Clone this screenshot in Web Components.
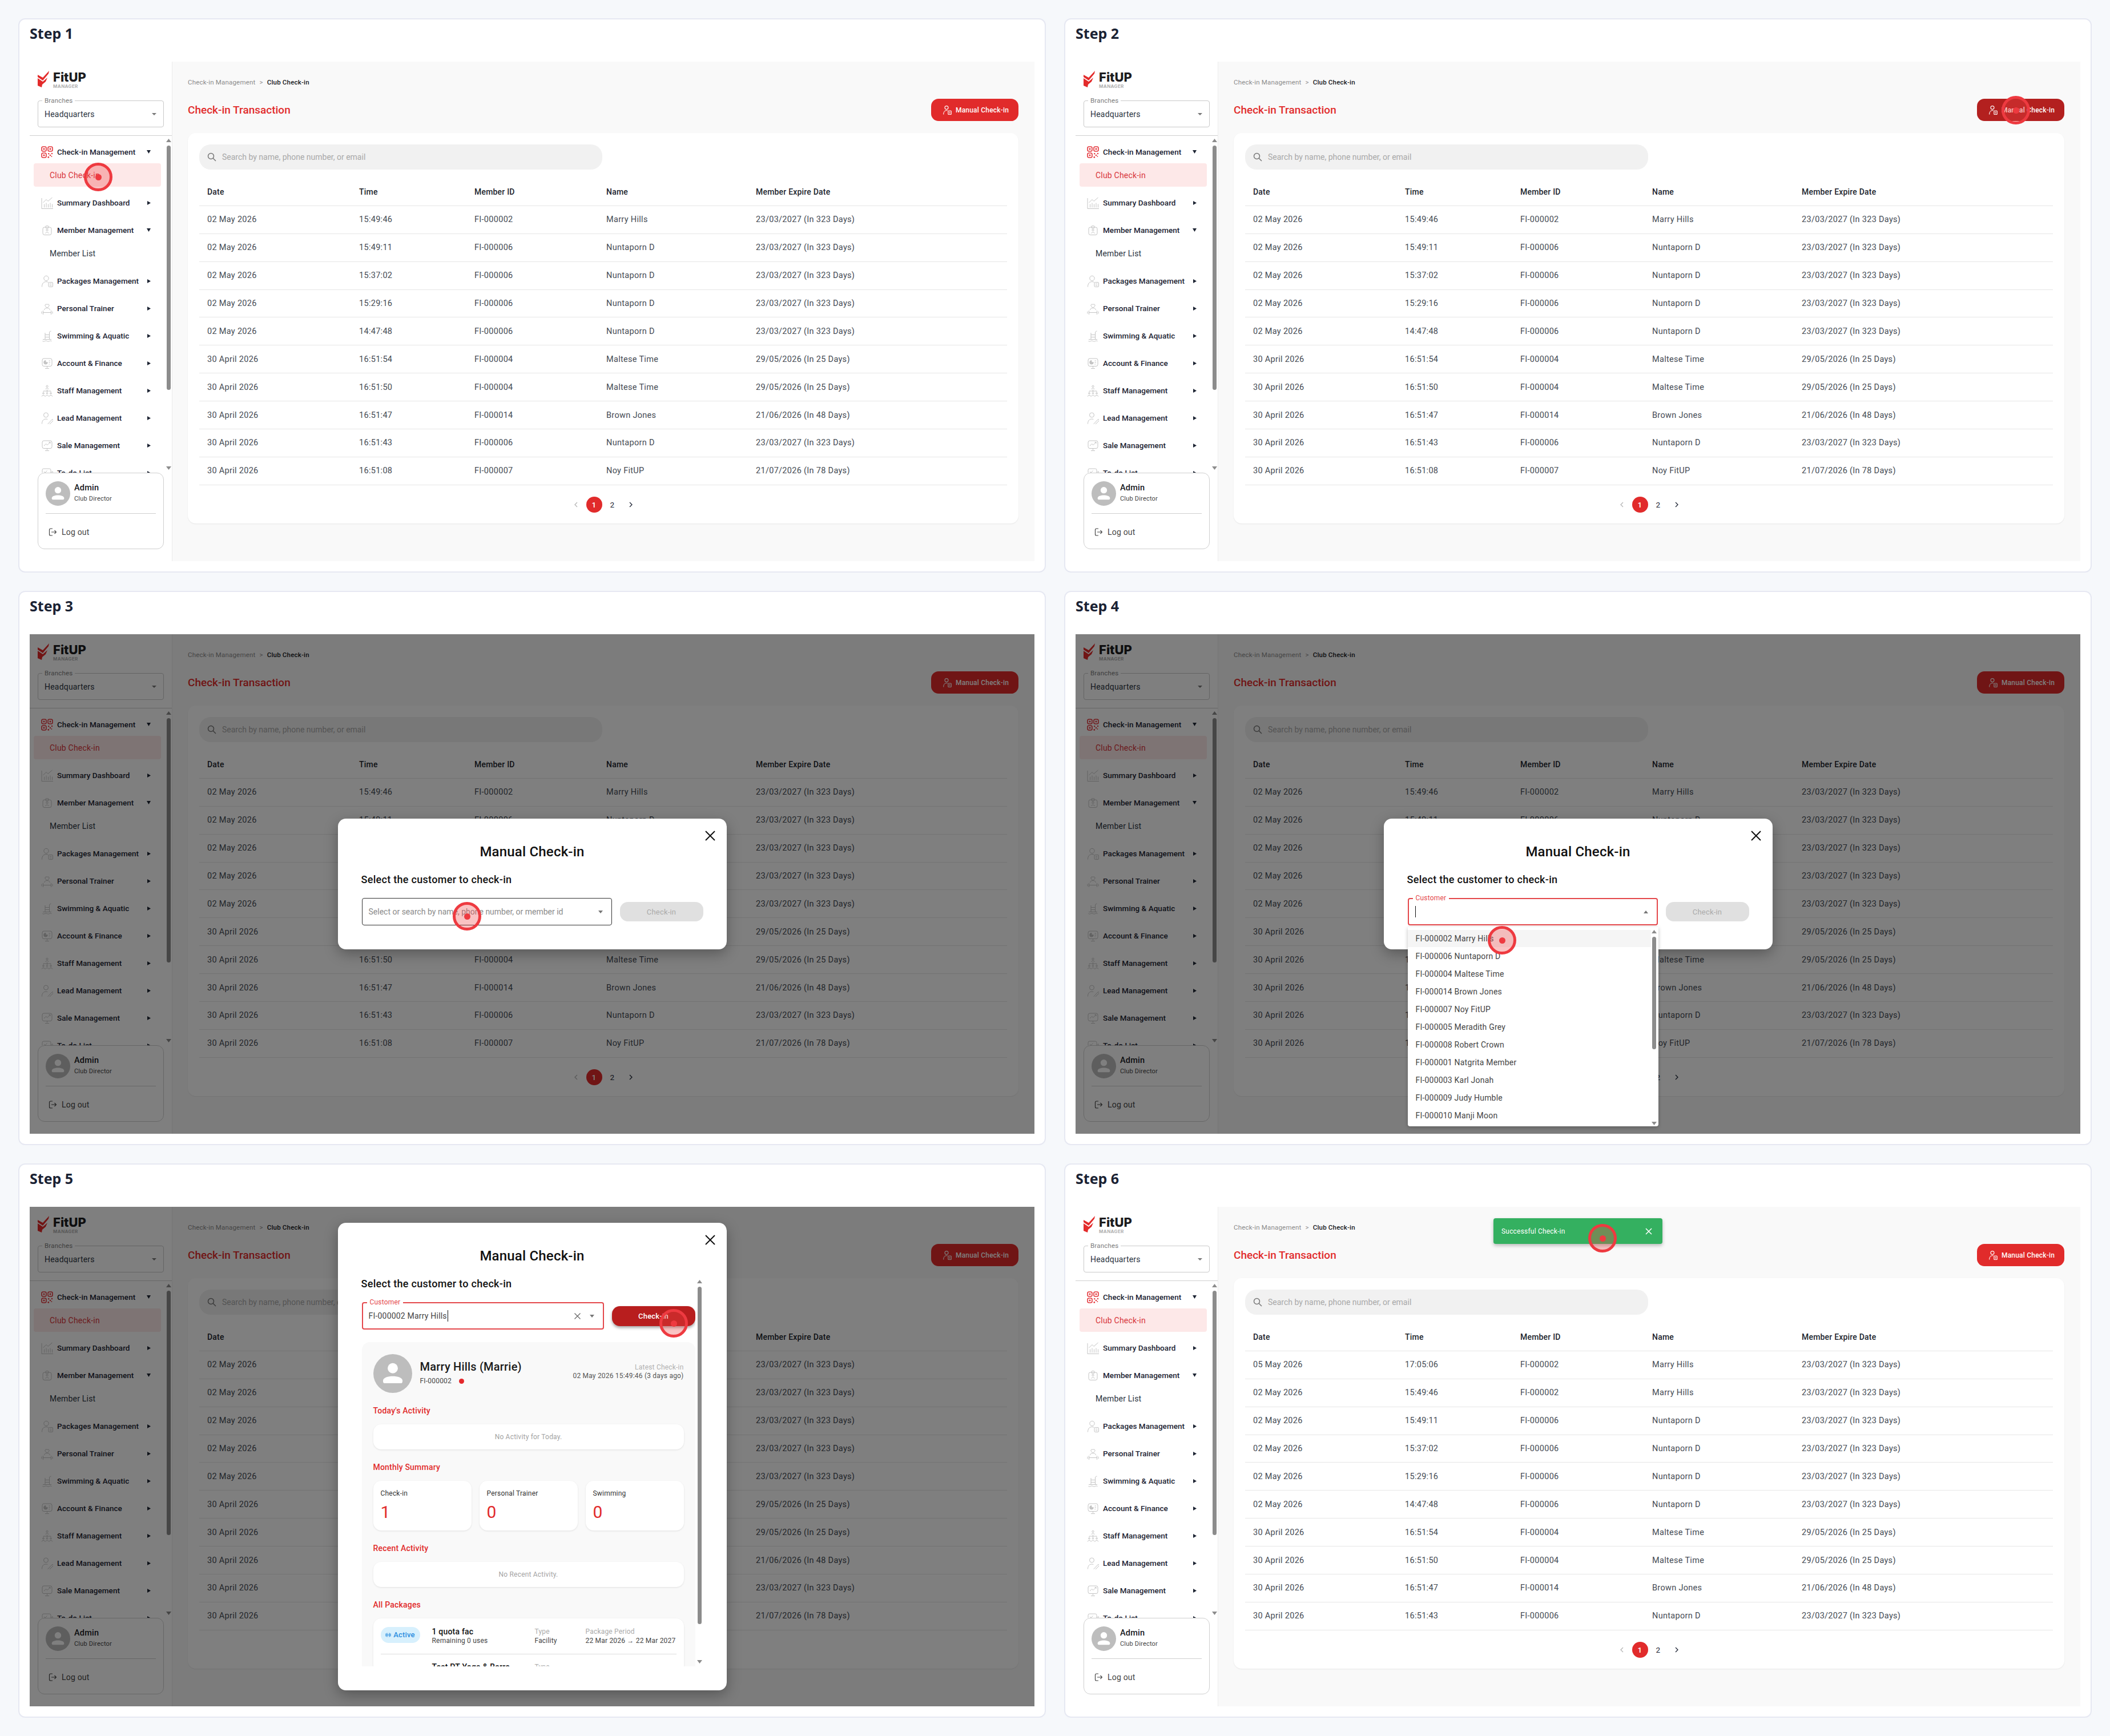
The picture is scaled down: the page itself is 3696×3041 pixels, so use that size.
<!DOCTYPE html>
<html lang="en">
<head>
<meta charset="utf-8">
<title>Manual Check-in steps</title>
<style>
  html, body { margin: 0; background: #f6f8fb; }
  body {
    width: 3696px;
    height: 3041px;
    box-sizing: border-box;
    padding: 32px;
    display: grid;
    grid-template-columns: 1800px 1800px;
    grid-auto-rows: 971px;
    gap: 32px;
    font-family: Roboto, "Liberation Sans", sans-serif;
    letter-spacing: .2px;
  }
</style>
</head>
<body>
  <step-panel label="Step 1">
    <app-screen>
      <click-dot x="120" y="202"></click-dot>
    </app-screen>
  </step-panel>

  <step-panel label="Step 2">
    <app-screen hover>
      <click-dot x="1647" y="85"></click-dot>
    </app-screen>
  </step-panel>

  <step-panel label="Step 3">
    <app-screen>
      <checkin-modal>
        <modal-label>Select the customer to check-in</modal-label>
        <customer-row state="idle"></customer-row>
      </checkin-modal>
      <click-dot x="766" y="494"></click-dot>
    </app-screen>
  </step-panel>

  <step-panel label="Step 4">
    <app-screen>
      <checkin-modal>
        <modal-label>Select the customer to check-in</modal-label>
        <customer-row state="open"></customer-row>
      </checkin-modal>
      <click-dot x="747" y="536"></click-dot>
    </app-screen>
  </step-panel>

  <step-panel label="Step 5">
    <app-screen>
      <checkin-modal tall>
        <modal-label>Select the customer to check-in</modal-label>
        <customer-row state="filled"></customer-row>
        <customer-panel></customer-panel>
      </checkin-modal>
      <click-dot x="1128" y="204"></click-dot>
    </app-screen>
  </step-panel>

  <step-panel label="Step 6">
    <app-screen rows="after">
      <success-toast>Successful Check-in</success-toast>
      <click-dot x="923" y="55"></click-dot>
    </app-screen>
  </step-panel>

<script>
const RED = '#e12b2b';

// thin grey menu icons, all on a 21 box
const ICONS = {
  qr: `<g fill="none" stroke="#e4393e" stroke-width="1.6"><rect x="1" y="1" width="8" height="8" rx="2.5"/><rect x="12" y="1" width="8" height="8" rx="2.5"/><rect x="1" y="12" width="8" height="8" rx="2.5"/></g>
       <g fill="#e4393e" stroke="none"><rect x="3.6" y="3.6" width="2.8" height="2.8" rx="1"/><rect x="14.6" y="3.6" width="2.8" height="2.8" rx="1"/><rect x="3.6" y="14.6" width="2.8" height="2.8" rx="1"/><circle cx="13.2" cy="13.2" r="1.2"/><circle cx="19" cy="13" r="1.2"/><circle cx="16" cy="16" r="1.3"/><circle cx="12.8" cy="19.4" r="1.4"/><circle cx="18.4" cy="18" r=".9"/></g>`,
  chart: `<path d="M1 2v18.5h20M5.5 18.5v-6M9 18.5v-8M12.5 18.5v-6M16 18.5v-8M19.5 18.5v-6M3.5 10 9 4.5l3 3L19.5 1"/>`,
  badge: `<rect x="3" y="5" width="15" height="13.5" rx="3"/><rect x="8" y="2.5" width="5" height="4.5" rx="1.5"/><circle cx="10.5" cy="10" r="1.6"/><path d="M7.5 15.8c.5-2.4 5.5-2.4 6 0"/>`,
  packages: `<circle cx="9" cy="5.5" r="4.2"/><path d="M1.5 20.5c0-6 3-9 7.500-9 1.300 0 2.500.3 3.500.9"/><rect x="13" y="12.500" width="7.500" height="8" rx="1.500"/><path d="M15 15.200h3.500M15 18h3.500"/>`,
  trainer: `<path d="M10.500 9.500 7.500 6.500a2.100 2.100 0 0 1 3-3 2.100 2.100 0 0 1 3 3zM5.500 13c.5-2.500 2.500-3.500 5-3.500s4.500 1 5 3.500M1 15.500v4M3.500 14v7M3.500 17.500h14M17.500 14v7M20 15.500v4"/>`,
  swim: `<path d="M7 16V5M14.500 16V5c0-1.800 1-2.800 3-3M7 8.500h7.500M7 12.500h7.500M3 16.500h15M2.500 19.500q2 1.300 4 0t4 0 4 0 4 0"/>`,
  account: `<rect x="2" y="2" width="17" height="13.500" rx="3"/><path d="M10.500 15.500v3M7 19.500h7M13.500 6h2.500M13.500 9h2.500M13.500 12h1.500"/><path d="M8 5.500a3.300 3.300 0 1 0 3.300 3.300H8z" fill="#c4c4c4"/>`,
  staff: `<circle cx="10.500" cy="2.800" r="1.600"/><path d="M8 8c0-2.600 5-2.600 5 0M10.500 8.500v2.500M4 12.500V11h13v1.500M10.500 11v2"/><circle cx="4" cy="15" r="1.300"/><circle cx="10.500" cy="15" r="1.300"/><circle cx="17" cy="15" r="1.300"/><path d="M1.200 20.500c0-2.600 5.600-2.600 5.600 0M7.700 20.500c0-2.600 5.600-2.600 5.600 0M14.200 20.500c0-2.600 5.600-2.600 5.600 0"/>`,
  lead: `<circle cx="8.500" cy="5" r="4"/><path d="M1.500 20.500c0-6 3-8.500 7-8.500 1 0 2 .2 2.800.5M12 20.500l7-7.500a1.400 1.400 0 0 1 2 2l-7 7-2.500.3z"/>`,
  sale: `<rect x="2" y="2" width="17" height="13.500" rx="3"/><path d="M10.500 15.500v3M7 19.500h7M5 11l3.500-3.500 2.500 2 5-5M13.500 4.500H16V7"/>`,
  todo: `<rect x="2" y="3" width="15" height="14" rx="2.500"/><path d="M5 8l2 2 3.500-3.500M5 13h5M13 16l6.500-8.500 1.500 1.200-6.500 8.500-2 .6z"/>`
};

class Base extends HTMLElement {
  connectedCallback() {
    if (this.shadowRoot) return;
    this.attachShadow({ mode: 'open' }).innerHTML = this.render();
  }
}

// white card with the "Step n" heading
customElements.define('step-panel', class extends Base {
  render() {
    return `<style>
      :host { display: block; box-sizing: border-box; height: 971px; background: #fff; border: 2px solid #e6e8f2; border-radius: 12px; padding: 8px 18px 18px; }
      h2 { margin: 0; height: 66px; font: 700 25px/32px "Noto Sans", sans-serif; letter-spacing: 0; color: #1a2233; }
    </style>
    <h2>${this.getAttribute('label')}</h2>
    <slot></slot>`;
  }
});

// one photographed app window: sidebar + main, overlays come in through the slot
customElements.define('app-screen', class extends Base {
  render() {
    return `<style>
      :host { display: flex; position: relative; width: 1760px; height: 875px; overflow: hidden; background: #fff; }
      fit-sidebar { flex: none; }
      checkin-main { flex: 1; min-width: 0; }
    </style>
    <fit-sidebar></fit-sidebar>
    <checkin-main ${this.hasAttribute('hover') ? 'hover' : ''} rows="${this.getAttribute('rows') || 'before'}"></checkin-main>
    <slot></slot>`;
  }
});

customElements.define('fit-logo', class extends Base {
  render() {
    return `<style>
      :host { display: flex; align-items: flex-start; gap: 7px; height: 29px; }
      svg { flex: none; }
      div { display: flex; flex-direction: column; }
      b { font: 800 22px/22px Inter, sans-serif; color: #1c1c1e; letter-spacing: 0; }
      span { font: 700 8px/8px Inter, sans-serif; color: #b0b0b0; letter-spacing: .35px; margin-top: 1px; }
    </style>
    <svg width="20" height="29" viewBox="0 0 20 29"><path fill="#e32b2b" d="M0 7l9 5L20 0l-1 5L9 17 0 11zM0 13l9 6 8-7-3 7-6 5-1 5-7-3z"/></svg>
    <div><b>FitUP</b><span>MANAGER</span></div>`;
  }
});

customElements.define('branch-select', class extends Base {
  render() {
    return `<style>
      :host { display: flex; align-items: center; position: relative; box-sizing: border-box; height: 47px; border: 1px solid #c9c9c9; border-radius: 4px; padding: 0 12px 0 11px; font-size: 14px; color: #2b3440; }
      label { position: absolute; left: 7px; top: -8px; padding: 0 4px; background: #fff; font-size: 11.500px; line-height: 14px; color: #7b7b7b; }
      span { flex: 1; }
      i { width: 0; height: 0; border: 4px solid transparent; border-top: 4.500px solid #777; border-bottom: 0; }
    </style>
    <label>Branches</label><span>Headquarters</span><i></i>`;
  }
});

customElements.define('nav-item', class extends Base {
  render() {
    const down = this.hasAttribute('open');
    const icon = this.getAttribute('icon');
    const arrow = down
      ? '<svg width="7" height="6" viewBox="0 0 7 6"><path d="M0 0h7L3.500 6z" fill="#1d2433"/></svg>'
      : '<svg width="6" height="7" viewBox="0 0 6 7"><path d="M0 0l6 3.500L0 7z" fill="#1d2433"/></svg>';
    return `<style>
      :host { display: flex; align-items: center; height: 40px; margin-top: 8px; padding: 0 27px 0 20px; font-size: 13.500px; font-weight: 500; letter-spacing: .05px; color: #1d2433; }
      svg.ic { flex: none; margin-right: 7px; fill: none; stroke: #c4c4c4; stroke-width: 1; }
      span { flex: 1; white-space: nowrap; }
    </style>
    <svg class="ic" width="21" height="21" viewBox="0 0 21 21">${ICONS[icon]}</svg><span>${this.getAttribute('label')}</span>${arrow}`;
  }
});

customElements.define('nav-sub', class extends Base {
  render() {
    return `<style>
      :host { display: flex; align-items: center; height: 41px; margin: 0 9px 0 7px; padding-left: 28px; border-radius: 4px; font-size: 14px; color: #2b3440; }
      :host([active]) { background: #fde8e8; color: #d8353a; }
    </style><slot></slot>`;
  }
});

customElements.define('fake-scrollbar', class extends Base {
  render() {
    return `<style>
      :host { display: flex; flex-direction: column; align-items: center; flex: none; width: 9px; padding: 5px 0; box-sizing: border-box; }
      svg { flex: none; }
      div { flex: none; width: 7px; height: var(--thumb, 428px); margin-top: 6px; background: #8c8c8c; border-radius: 4px; }
      span { flex: 1; }
    </style>
    <svg width="9" height="6" viewBox="0 0 9 6"><path d="M4.500 0L9 6H0z" fill="#8c8c8c"/></svg>
    <div></div><span></span>
    <svg width="9" height="6" viewBox="0 0 9 6"><path d="M0 0h9L4.500 6z" fill="#8c8c8c"/></svg>`;
  }
});

customElements.define('user-avatar', class extends Base {
  render() {
    return `<style>
      :host { display: block; flex: none; line-height: 0; }
      svg { width: 100%; height: 100%; }
    </style>
    <svg viewBox="0 0 44 44"><circle cx="22" cy="22" r="22" fill="#bdbdbd"/><circle cx="22" cy="16" r="5.800" fill="#fff"/><path d="M11 30c0-3.500 6-5 11-5s11 1.500 11 5v1a2 2 0 0 1-2 2H13a2 2 0 0 1-2-2z" fill="#fff"/></svg>`;
  }
});

customElements.define('profile-card', class extends Base {
  render() {
    return `<style>
      :host { display: block; box-sizing: border-box; height: 134px; background: #fff; border: 1px solid #cfcfcf; border-radius: 12px; padding: 14px 13px 0; }
      .who { display: flex; gap: 7px; height: 43px; align-items: center; }
      user-avatar { width: 43px; height: 43px; }
      b { display: block; font-size: 14.500px; font-weight: 500; line-height: 18px; color: #16181d; margin-top: -2px; }
      small { display: block; font-size: 11px; line-height: 16px; color: #444; margin-top: 2px; }
      hr { border: 0; border-top: 1px solid #cfcfcf; margin: 13px 0 0; }
      .out { display: flex; align-items: center; gap: 9px; margin: 25px 0 0 5px; font-size: 14px; line-height: 14px; color: #444; }
    </style>
    <div class="who"><user-avatar></user-avatar><div><b>Admin</b><small>Club Director</small></div></div>
    <hr>
    <div class="out"><svg width="14" height="14" viewBox="0 0 14 14" fill="none" stroke="#444" stroke-width="1.200"><path d="M7 1H3.500A2 2 0 0 0 1.500 3v8a2 2 0 0 0 2 2H7M5 7h8.500M10.500 4l3 3-3 3"/></svg>Log out</div>`;
  }
});

customElements.define('fit-sidebar', class extends Base {
  render() {
    return `<style>
      :host { display: flex; flex-direction: column; box-sizing: border-box; width: 250px; height: 875px; background: #fff; border-right: 1px solid #ececec; }
      fit-logo { margin: 16px 0 0 14px; }
      branch-select { margin: 23px 14px 0; }
      hr { flex: none; width: 100%; border: 0; border-top: 1px solid #cfcfcf; margin: 14px 0 0; }
      .scroll { display: flex; height: 590px; flex: none; }
      .list { flex: 1; min-width: 0; overflow: hidden; }
      fake-scrollbar { margin: 0 1px 0 0; }
      profile-card { margin: 0 14px 0; }
    </style>
    <fit-logo></fit-logo>
    <branch-select></branch-select>
    <hr>
    <div class="scroll">
      <div class="list">
        <nav-item icon="qr" label="Check-in Management" open></nav-item>
        <nav-sub active>Club Check-in</nav-sub>
        <nav-item icon="chart" label="Summary Dashboard"></nav-item>
        <nav-item icon="badge" label="Member Management" open></nav-item>
        <nav-sub>Member List</nav-sub>
        <nav-item icon="packages" label="Packages Management"></nav-item>
        <nav-item icon="trainer" label="Personal Trainer"></nav-item>
        <nav-item icon="swim" label="Swimming &amp; Aquatic"></nav-item>
        <nav-item icon="account" label="Account &amp; Finance"></nav-item>
        <nav-item icon="staff" label="Staff Management"></nav-item>
        <nav-item icon="lead" label="Lead Management"></nav-item>
        <nav-item icon="sale" label="Sale Management"></nav-item>
        <nav-item icon="todo" label="To-do List"></nav-item>
      </div>
      <fake-scrollbar></fake-scrollbar>
    </div>
    <profile-card></profile-card>`;
  }
});

const ROWS = [
  ['02 May 2026', '15:49:46', 'FI-000002', 'Marry Hills', '23/03/2027 (In 323 Days)'],
  ['02 May 2026', '15:49:11', 'FI-000006', 'Nuntaporn D', '23/03/2027 (In 323 Days)'],
  ['02 May 2026', '15:37:02', 'FI-000006', 'Nuntaporn D', '23/03/2027 (In 323 Days)'],
  ['02 May 2026', '15:29:16', 'FI-000006', 'Nuntaporn D', '23/03/2027 (In 323 Days)'],
  ['02 May 2026', '14:47:48', 'FI-000006', 'Nuntaporn D', '23/03/2027 (In 323 Days)'],
  ['30 April 2026', '16:51:54', 'FI-000004', 'Maltese Time', '29/05/2026 (In 25 Days)'],
  ['30 April 2026', '16:51:50', 'FI-000004', 'Maltese Time', '29/05/2026 (In 25 Days)'],
  ['30 April 2026', '16:51:47', 'FI-000014', 'Brown Jones', '21/06/2026 (In 48 Days)'],
  ['30 April 2026', '16:51:43', 'FI-000006', 'Nuntaporn D', '23/03/2027 (In 323 Days)'],
  ['30 April 2026', '16:51:08', 'FI-000007', 'Noy FitUP', '21/07/2026 (In 78 Days)']
];
const NEW_ROW = ['05 May 2026', '17:05:06', 'FI-000002', 'Marry Hills', '23/03/2027 (In 323 Days)'];

customElements.define('checkin-table', class extends Base {
  render() {
    const rows = this.getAttribute('rows') === 'after' ? [NEW_ROW, ...ROWS.slice(0, 9)] : ROWS;
    const line = cells => cells.map(c => `<span>${c}</span>`).join('');
    return `<style>
      :host { display: block; font-size: 14.500px; letter-spacing: .3px; color: #454b54; }
      .r { display: grid; grid-template-columns: 266px 202px 231px 262px 1fr; align-items: center; box-sizing: border-box; height: 48.900px; border-bottom: 1px solid #e6e6e6; }
      .r span { padding-left: 14px; white-space: nowrap; }
      .h { font-weight: 500; font-size: 14px; letter-spacing: .2px; color: #20252d; }
    </style>
    <div class="r h">${line(['Date', 'Time', 'Member ID', 'Name', 'Member Expire Date'])}</div>
    ${rows.map(r => `<div class="r">${line(r)}</div>`).join('')}`;
  }
});

customElements.define('page-nav', class extends Base {
  render() {
    return `<style>
      :host { display: flex; justify-content: center; gap: 4px; height: 28px; font-size: 13.500px; color: #1d2433; }
      span { display: flex; align-items: center; justify-content: center; width: 28px; height: 28px; border-radius: 50%; }
      .on { background: ${RED}; color: #fff; font-weight: 500; }
      svg { fill: none; stroke-width: 1.300; }
    </style>
    <span><svg width="6" height="10" viewBox="0 0 6 10" stroke="#b5b5b5"><path d="M5 1 1 5l4 4"/></svg></span>
    <span class="on">1</span><span>2</span>
    <span><svg width="6" height="10" viewBox="0 0 6 10" stroke="#1d2433"><path d="M1 1l4 4-4 4"/></svg></span>`;
  }
});

customElements.define('checkin-main', class extends Base {
  render() {
    const btn = this.hasAttribute('hover') ? '#b3201f' : RED;
    return `<style>
      :host { display: block; box-sizing: border-box; height: 875px; background: #f9f9f9; padding: 28px 28px 0 27px; }
      .crumb { font-size: 11.500px; line-height: 16px; color: #8b8b8b; white-space: nowrap; }
      .crumb i { font-style: normal; margin: 0 7px; }
      .crumb b { font-weight: 500; color: #15171b; }
      .head { display: flex; align-items: center; justify-content: space-between; height: 39px; margin-top: 21px; }
      h1 { margin: 0; font-size: 19px; font-weight: 500; letter-spacing: 0; color: ${RED}; }
      button { display: flex; align-items: center; gap: 7px; height: 39px; width: 153px; box-sizing: border-box; padding: 0 0 0 21px; border: 0; border-radius: 13px; background: ${btn}; color: #fff; font: 500 12px Roboto, sans-serif; letter-spacing: .2px; }
      .card { box-sizing: border-box; height: 684px; margin-top: 21px; padding: 20px; background: #fff; border-radius: 14px; box-shadow: 0 1px 2px rgba(0,0,0,.08); }
      .search { display: flex; align-items: center; gap: 10px; width: 706px; height: 44px; box-sizing: border-box; padding-left: 14px; background: #f1f1f1; border-radius: 20px; font-size: 14px; letter-spacing: 0; color: #a8a8a8; }
      checkin-table { margin-top: 15px; }
      page-nav { margin-top: 20px; }
    </style>
    <div class="crumb">Check-in Management<i>&gt;</i><b>Club Check-in</b></div>
    <div class="head">
      <h1>Check-in Transaction</h1>
      <button><svg width="15" height="16" viewBox="0 0 15 16" fill="none" stroke="#fff" stroke-width="1.100"><circle cx="6" cy="3.600" r="3"/><path d="M.7 15.500c0-4 2-7 5.300-7 .8 0 1.500.1 2 .4"/><rect x="8.800" y="9" width="5.500" height="6.500" rx="1"/><path d="M10.300 11.200h2.500M10.300 13.200h2.500"/></svg>Manual Check-in</button>
    </div>
    <div class="card">
      <div class="search"><svg width="16" height="16" viewBox="0 0 16 16" fill="none" stroke="#777" stroke-width="1.500"><circle cx="6.500" cy="6.500" r="5"/><path d="M10.200 10.200 15 15"/></svg>Search by name, phone number, or email</div>
      <checkin-table rows="${this.getAttribute('rows')}"></checkin-table>
      <page-nav></page-nav>
    </div>`;
  }
});

// the red click marker, its place on the screen is the content
customElements.define('click-dot', class extends Base {
  render() {
    this.style.left = this.getAttribute('x') + 'px';
    this.style.top = this.getAttribute('y') + 'px';
    return `<style>
      :host { position: absolute; width: 50px; height: 50px; margin: -25px 0 0 -25px; box-sizing: border-box; border: 5px solid #ee3a40; border-radius: 50%; background: rgba(239,68,68,.32); display: flex; align-items: center; justify-content: center; z-index: 20; }
      i { width: 11px; height: 11px; border-radius: 50%; background: #ee3a40; }
    </style><i></i>`;
  }
});

customElements.define('success-toast', class extends Base {
  render() {
    return `<style>
      :host { position: absolute; left: 732px; top: 20px; display: flex; align-items: center; justify-content: space-between; box-sizing: border-box; width: 296px; height: 45px; padding: 0 18px 0 14px; background: #34b060; border-radius: 4px; box-shadow: 0 3px 6px rgba(0,0,0,.25); font-size: 12px; color: #fff; }
    </style><slot></slot><svg width="12" height="12" viewBox="0 0 12 12" stroke="#fff" stroke-width="1.500"><path d="M1 1l10 10M11 1 1 11"/></svg>`;
  }
});

customElements.define('checkin-modal', class extends Base {
  render() {
    const tall = this.hasAttribute('tall');
    return `<style>
      :host { position: absolute; inset: 0; display: flex; align-items: center; justify-content: center; background: rgba(0,0,0,.5); z-index: 10; }
      .box { position: relative; box-sizing: border-box; width: 681px; ${tall ? 'height: 819px;' : 'height: 229px;'} padding: 42px 41px 42px; background: #fff; border-radius: 14px; box-shadow: 0 8px 24px rgba(0,0,0,.3); }
      .x { position: absolute; right: 20px; top: 21px; }
      h3 { margin: 0; height: 32px; text-align: center; font-size: 24px; font-weight: 500; line-height: 32px; color: #111; }
      .body { ${tall ? 'display: flex; height: 682px; margin-top: 21px;' : 'margin-top: 21px;'} }
      .col { ${tall ? 'flex: 1; min-width: 0; overflow: hidden;' : ''} }
      fake-scrollbar { margin: 0 0 0 2px; width: 12px; --thumb: 591px; }
    </style>
    <div class="box">
      <svg class="x" width="18" height="18" viewBox="0 0 18 18" stroke="#111" stroke-width="2"><path d="M1 1l16 16M17 1 1 17"/></svg>
      <h3>Manual Check-in</h3>
      <div class="body"><div class="col"><slot></slot></div>${tall ? '<fake-scrollbar></fake-scrollbar>' : ''}</div>
    </div>`;
  }
});

customElements.define('modal-label', class extends Base {
  render() {
    return `<style>
      :host { display: block; height: 24px; font-size: 18px; font-weight: 500; line-height: 24px; letter-spacing: .3px; color: #111; white-space: nowrap; }
    </style><slot></slot>`;
  }
});

const CUSTOMERS = ['FI-000002 Marry Hills', 'FI-000006 Nuntaporn D', 'FI-000004 Maltese Time', 'FI-000014 Brown Jones', 'FI-000007 Noy FitUP', 'FI-000005 Meradith Grey', 'FI-000008 Robert Crown', 'FI-000001 Natgrita Member', 'FI-000003 Karl Jonah', 'FI-000009 Judy Humble', 'FI-000010 Manji Moon'];

customElements.define('customer-row', class extends Base {
  render() {
    const state = this.getAttribute('state');
    const idle = state === 'idle';
    const filled = state === 'filled';
    const up = state === 'open';
    let inner = '<span class="ph">Select or search by name, phone number, or member id</span>';
    if (!idle) inner = `<span class="val">${filled ? 'FI-000002 Marry Hills' : ''}</span><i class="caret"></i><span class="sp"></span>`;
    return `<style>
      :host { display: flex; position: relative; align-items: center; gap: 14px; height: 48px; margin-top: 20px; margin-left: 1px; }
      .input { position: relative; flex: 1; min-width: 0; display: flex; align-items: center; box-sizing: border-box; height: 48px; padding: 0 15px 0 11px; border-radius: 4px; font-size: 14px; }
      .idle { border: 1px solid #333; }
      .red { border: 2px solid #e4474b; padding-left: 10px; }
      .ph { flex: 1; color: #8a8a8a; white-space: nowrap; letter-spacing: 0; }
      .val { color: #444; white-space: nowrap; }
      .caret { width: 1px; height: 20px; background: #111; margin-left: 1px; }
      .sp { flex: 1; }
      label { position: absolute; left: 7px; top: -9px; padding: 0 5px; background: #fff; font-size: 12px; line-height: 14px; color: #e4474b; }
      .clear { margin-right: 16px; }
      .arrow { width: 0; height: 0; border: 4px solid transparent; }
      .arrow.d { border-top: 5px solid #777; border-bottom: 0; }
      .arrow.u { border-bottom: 5px solid #777; border-top: 0; }
      button { flex: none; width: 146px; height: ${filled ? '35px' : '34px'}; border: 0; border-radius: 14px; font: 500 13px Roboto, sans-serif; letter-spacing: .2px; }
      .off { background: #e0e0e0; color: #aaa; font-weight: 400; }
      .on { background: #b81e1e; color: #fff; box-shadow: 0 3px 5px rgba(0,0,0,.35); }
      .menu { position: absolute; left: 0; top: 51px; width: 439px; height: 349px; display: flex; box-sizing: border-box; padding-top: 5px; background: #fff; box-shadow: 0 2px 6px rgba(0,0,0,.25); border-radius: 0 0 4px 4px; font-size: 14px; color: #444; z-index: 5; }
      .items { flex: 1; min-width: 0; overflow: hidden; }
      .items div { height: 31px; line-height: 30px; padding-left: 14px; }
      .items div:first-child { background: #f5f5f5; height: 30px; margin-bottom: 1px; }
      fake-scrollbar { width: 12px; margin-right: 1px; --thumb: 197px; padding: 0 0 2px; }
    </style>
    <div class="input ${idle ? 'idle' : 'red'}">
      ${idle ? '' : '<label>Customer</label>'}
      ${inner}
      ${filled ? '<svg class="clear" width="11" height="11" viewBox="0 0 11 11" stroke="#666" stroke-width="1.200"><path d="M.5.5l10 10M10.500.5l-10 10"/></svg>' : ''}
      <i class="arrow ${up ? 'u' : 'd'}"></i>
    </div>
    <button class="${filled ? 'on' : 'off'}">Check-in</button>
    ${up ? `<div class="menu"><div class="items">${CUSTOMERS.map(c => `<div>${c}</div>`).join('')}</div><fake-scrollbar></fake-scrollbar></div>` : ''}`;
  }
});

customElements.define('stat-card', class extends Base {
  render() {
    return `<style>
      :host { display: block; box-sizing: border-box; height: 87px; padding: 14px 13px 0; background: #fff; border-radius: 14px; box-shadow: 0 1px 3px rgba(0,0,0,.1); font-size: 12px; line-height: 16px; color: #333; }
      b { display: block; margin-top: 8px; font-size: 30px; font-weight: 400; line-height: 34px; color: ${RED}; }
    </style>${this.getAttribute('label')}<b>${this.getAttribute('value')}</b>`;
  }
});

customElements.define('package-row', class extends Base {
  render() {
    const a = n => this.getAttribute(n) || '';
    return `<style>
      :host { display: grid; grid-template-columns: 69px 159px 68px 1fr; column-gap: 21px; align-items: start; padding: 15px 0 15px; font-size: 12px; line-height: 16px; color: #444; }
      :host(:not(:last-child)) { border-bottom: 1px solid #ddd; }
      .pill { display: flex; align-items: center; justify-content: center; gap: 4px; height: 28px; border-radius: 14px; background: #d7f0fd; color: #2d8fe0; font-size: 13px; font-weight: 500; }
      b { display: block; font-size: 14px; font-weight: 500; line-height: 16px; color: #111; white-space: nowrap; }
      small { color: #aaa; font-size: 12px; display: block; white-space: nowrap; }
      span { white-space: nowrap; }
      :host([lower]) { padding-top: 14px; }
      :host([lower]) .pill { margin-top: 8px; }
    </style>
    <div class="pill"><svg width="10" height="10" viewBox="0 0 10 10" fill="none" stroke="#2d8fe0" stroke-width="1.200"><path d="M1 2.500v5M3 1.500v7M3 5h4M7 1.500v7M9 2.500v5"/></svg>Active</div>
    <div><b>${a('name')}</b>${a('left')}</div>
    <div><small>Type</small><span>${a('type')}</span></div>
    <div><small>${a('plabel')}</small><span>${a('period')}</span></div>`;
  }
});

customElements.define('customer-panel', class extends Base {
  render() {
    return `<style>
      :host { display: block; box-sizing: border-box; height: 640px; margin: 22px 0 0 1px; padding: 20px; background: #f9f9f9; border-radius: 14px 14px 0 0; color: #333; }
      .top { display: flex; align-items: center; height: 69px; }
      user-avatar { width: 68px; height: 68px; margin-right: 14px; }
      .name { flex: 1; }
      .name b { display: block; font-size: 20px; font-weight: 500; line-height: 26px; color: #1a1a1a; margin-top: -3px; }
      .name span { display: inline-flex; align-items: center; gap: 13px; font-size: 12px; line-height: 16px; margin-top: 4px; color: #444; }
      .name i { width: 9px; height: 9px; border-radius: 50%; background: #e4282c; }
      .last { text-align: right; font-size: 12px; line-height: 15px; color: #555; margin-top: -5px; }
      .last small { display: block; font-size: 12px; color: #b0b0b0; }
      h4 { margin: 21px 0 14px; font-size: 14px; font-weight: 500; line-height: 20px; color: ${RED}; }
      .empty { display: flex; align-items: center; justify-content: center; height: 44px; background: #fff; border-radius: 14px; box-shadow: 0 1px 3px rgba(0,0,0,.1); font-size: 12px; color: #a3a3a3; }
      .stats { display: grid; grid-template-columns: repeat(3, 1fr); gap: 14px; }
      .pk { padding: 0 13px; background: #fff; border-radius: 14px 14px 0 0; box-shadow: 0 1px 3px rgba(0,0,0,.1); }
    </style>
    <div class="top">
      <user-avatar></user-avatar>
      <div class="name"><b>Marry Hills (Marrie)</b><span>FI-000002<i></i></span></div>
      <div class="last"><small>Latest Check-in</small>02 May 2026 15:49:46 (3 days ago)</div>
    </div>
    <h4>Today's Activity</h4>
    <div class="empty">No Activity for Today.</div>
    <h4>Monthly Summary</h4>
    <div class="stats">
      <stat-card label="Check-in" value="1"></stat-card>
      <stat-card label="Personal Trainer" value="0"></stat-card>
      <stat-card label="Swimming" value="0"></stat-card>
    </div>
    <h4>Recent Activity</h4>
    <div class="empty">No Recent Activity.</div>
    <h4>All Packages</h4>
    <div class="pk">
      <package-row name="1 quota fac" left="Remaining 0 uses" type="Facility" plabel="Package Period" period="22 Mar 2026 → 22 Mar 2027"></package-row>
      <package-row lower name="Test PT Yoga &amp; Barre" left="Remaining 8 uses" type="Personal Trainer" plabel="" period=""></package-row>
    </div>`;
  }
});
</script>
</body>
</html>
